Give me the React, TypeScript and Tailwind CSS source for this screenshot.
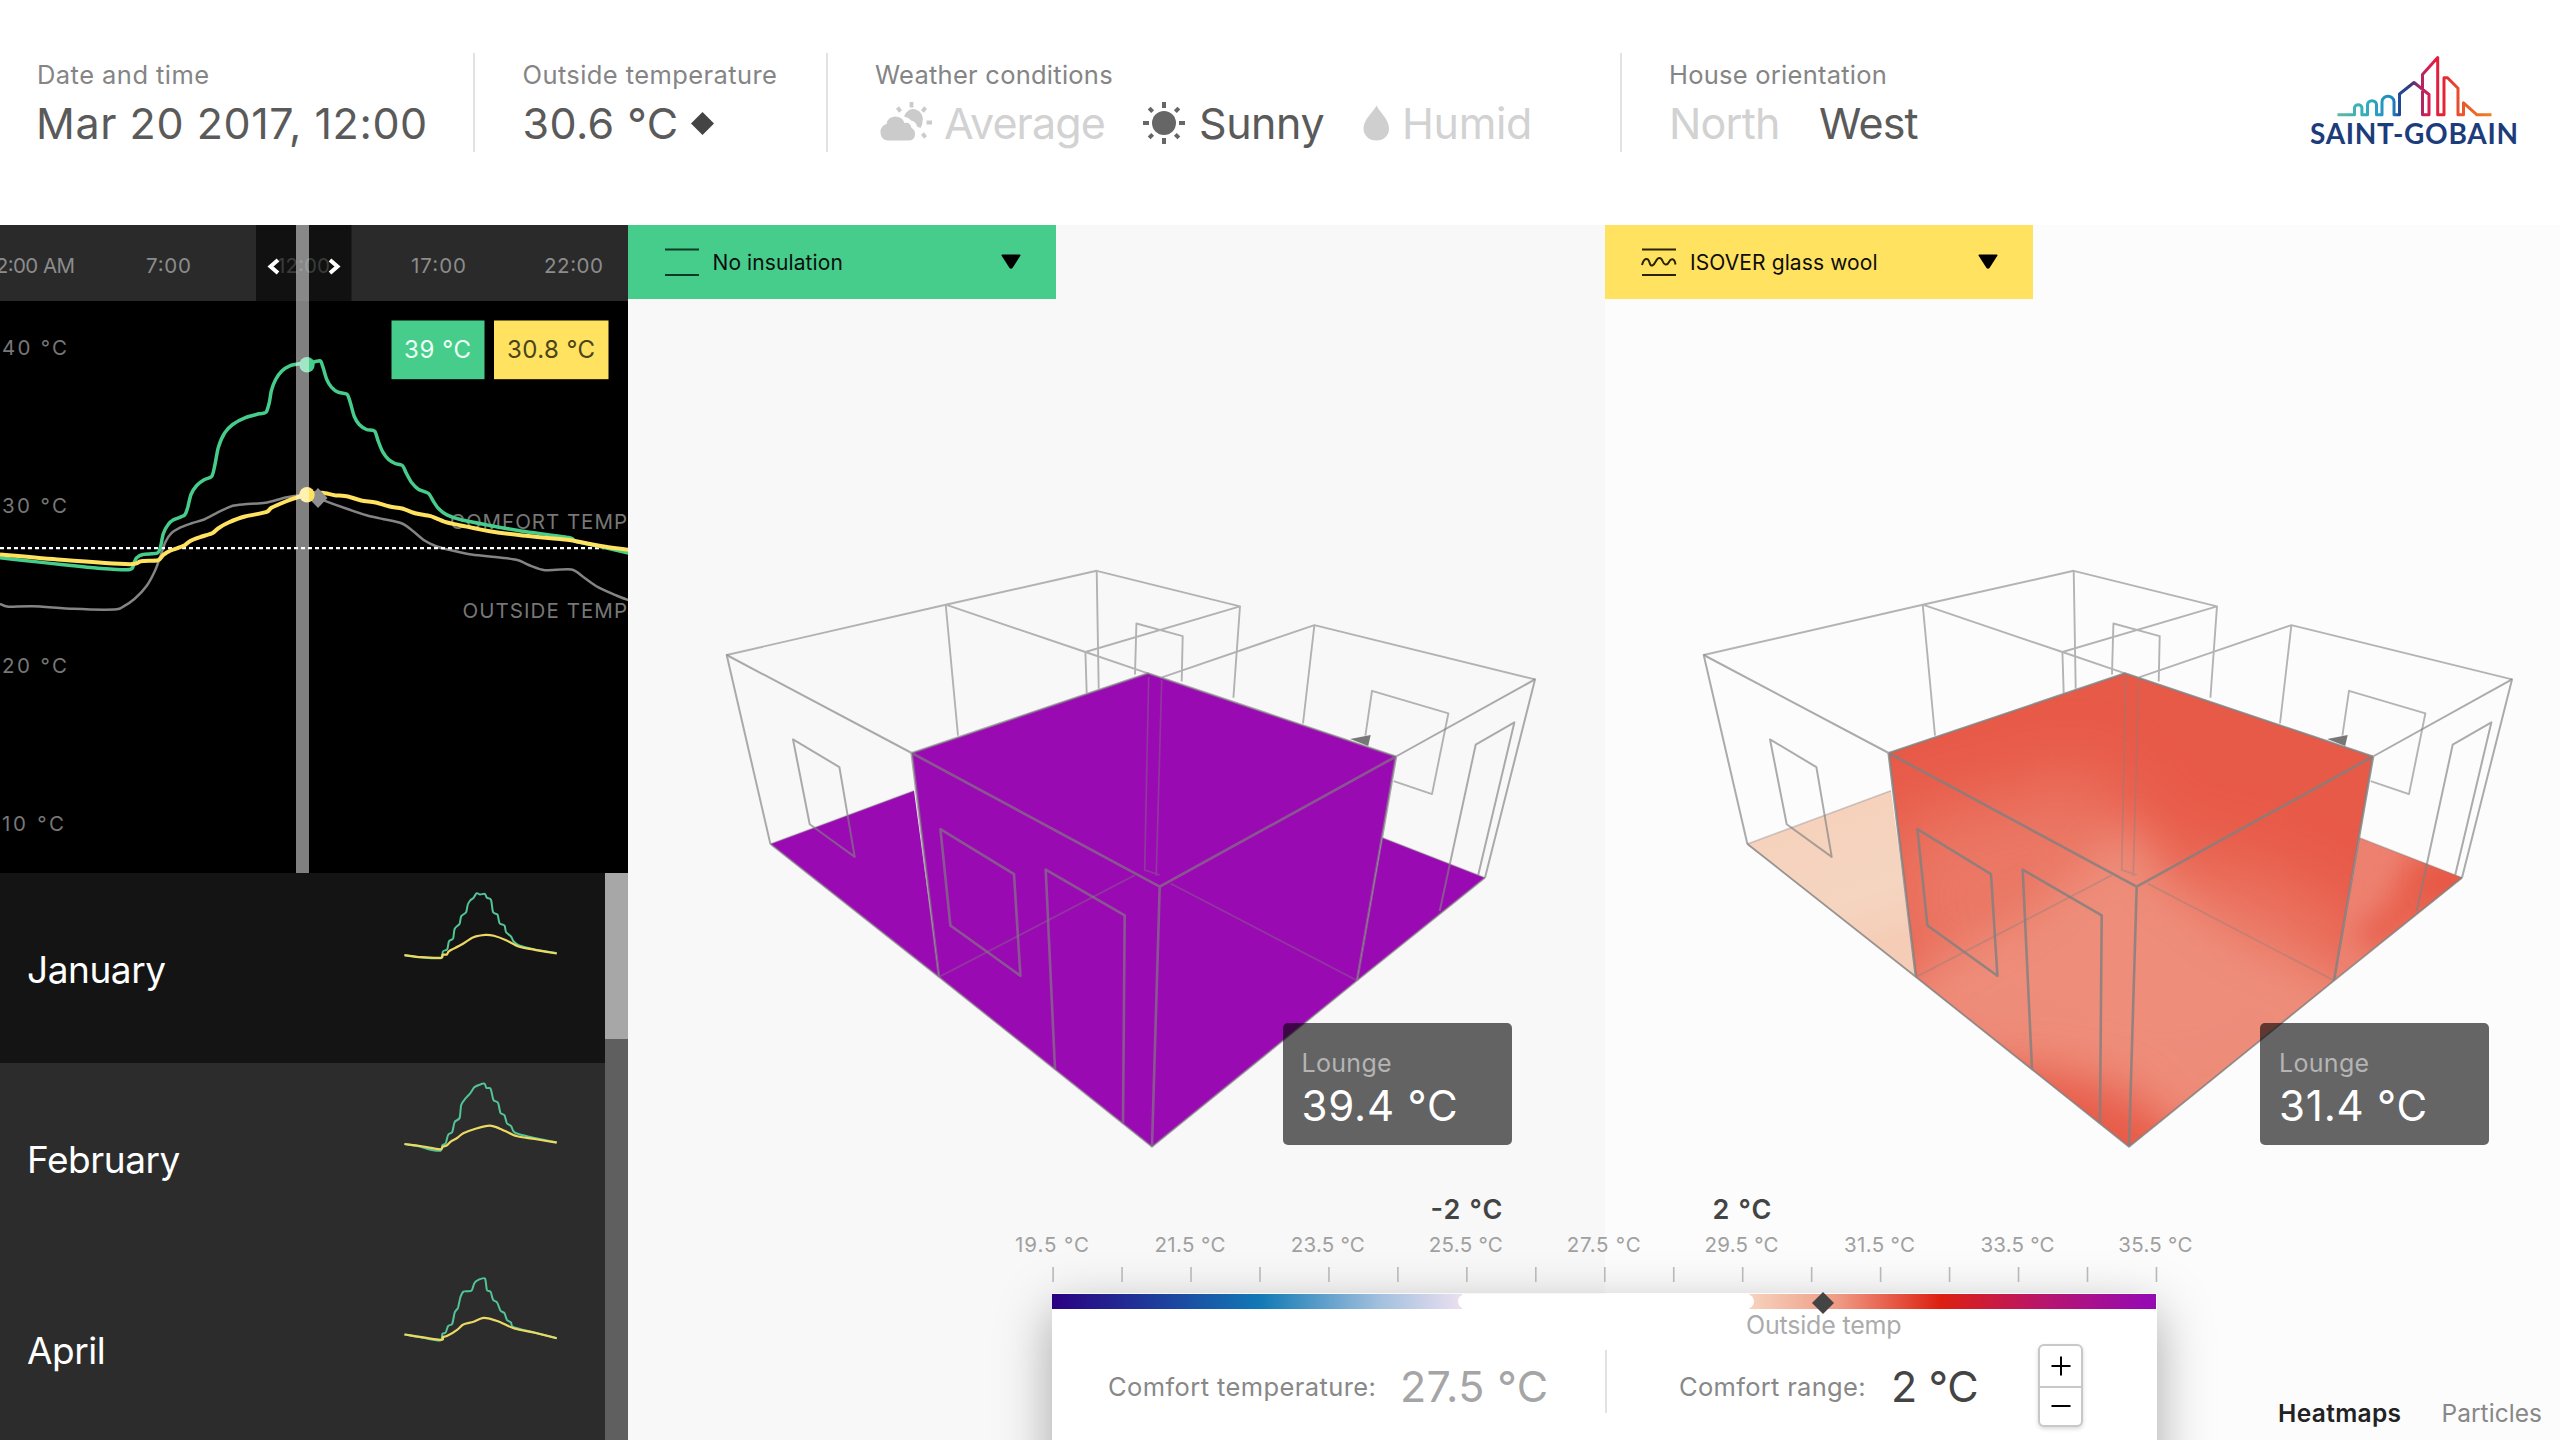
import React from "react";

type Pt = [number, number];

/* Chart samples are stored on a 2.45 x 3 grid and scaled to pixels here. */
const scalePts = (pts: Pt[], oy: number): Pt[] => pts.map(([x, y]) => [x / 2.45, oy + y / 3]);

/* Monotone-looking curve: cubic segments with damped tangents. */
const curve = (pts: Pt[]): string => {
  const t = 0.13;
  let d = `M${pts[0][0].toFixed(1)} ${pts[0][1].toFixed(1)}`;
  for (let i = 0; i < pts.length - 1; i++) {
    const p0 = pts[Math.max(0, i - 1)];
    const p1 = pts[i];
    const p2 = pts[i + 1];
    const p3 = pts[Math.min(pts.length - 1, i + 2)];
    d += `C${(p1[0] + (p2[0] - p0[0]) * t).toFixed(1)} ${(p1[1] + (p2[1] - p0[1]) * t).toFixed(1)} ${(
      p2[0] -
      (p3[0] - p1[0]) * t
    ).toFixed(1)} ${(p2[1] - (p3[1] - p1[1]) * t).toFixed(1)} ${p2[0].toFixed(1)} ${p2[1].toFixed(1)}`;
  }
  return d;
};

const GREEN: Pt[] = [[0,1012],[60,1020],[150,1032],[240,1043],[318,1047],[328,1027],[335,1012],[350,1002],[385,998],[393,980],[400,940],[412,912],[425,898],[452,884],[460,860],[468,822],[482,795],[500,778],[519,767],[527,730],[535,680],[550,638],[570,612],[600,592],[635,580],[652,575],[660,545],[665,510],[675,478],[690,452],[710,436],[735,430],[750,431],[783,421],[790,435],[800,475],[812,500],[828,515],[850,521],[858,545],[868,588],[880,612],[898,627],[918,632],[926,660],[938,695],[952,717],[968,729],[986,735],[995,757],[1008,785],[1025,806],[1050,819],[1062,843],[1075,865],[1095,883],[1130,898],[1200,915],[1280,932],[1393,951],[1410,962],[1470,978],[1540,998]];
const YELLOW: Pt[] = [[0,1002],[150,1018],[318,1031],[345,1022],[387,1019],[400,1003],[418,990],[450,976],[465,962],[490,950],[520,938],[535,923],[560,906],[600,888],[652,875],[665,862],[700,843],[735,828],[765,820],[790,817],[820,824],[852,828],[885,840],[920,846],[955,858],[985,864],[1020,879],[1055,887],[1090,904],[1130,915],[1200,932],[1280,945],[1390,958],[1430,967],[1480,978],[1540,988]];
const GRAY: Pt[] = [[0,1150],[20,1159],[80,1157],[180,1165],[280,1167],[300,1160],[330,1135],[360,1095],[380,1050],[395,1000],[405,965],[420,938],[440,922],[470,908],[500,897],[540,872],[570,856],[600,851],[650,847],[700,831],[740,824],[770,826],[790,838],[850,865],[900,885],[940,896],[985,909],[1010,930],[1040,960],[1070,978],[1100,988],[1150,1001],[1200,1008],[1265,1018],[1300,1036],[1335,1049],[1400,1047],[1430,1070],[1465,1100],[1510,1125],[1540,1139]];

const MONTHS: { name: string; active?: boolean; green: Pt[]; yellow: Pt[]; oy: number }[] = [
  {
    name: "January",
    active: true,
    oy: -272.5,
    green: [[991,1064],[1030,1070],[1080,1073],[1085,1053],[1096,1046],[1100,1022],[1110,1014],[1114,985],[1126,970],[1130,947],[1142,935],[1146,912],[1152,900],[1160,892],[1168,878],[1176,882],[1188,880],[1193,892],[1203,898],[1208,935],[1219,943],[1224,968],[1236,975],[1240,995],[1252,1008],[1258,1022],[1272,1035],[1310,1047],[1364,1058]],
    yellow: [[991,1064],[1030,1070],[1080,1072],[1084,1063],[1095,1062],[1100,1052],[1130,1033],[1160,1010],[1190,1003],[1210,1006],[1240,1019],[1270,1038],[1310,1048],[1364,1059]],
  },
  {
    name: "February",
    oy: -63,
    green: [[991,432],[1030,440],[1050,448],[1079,452],[1084,436],[1092,430],[1098,404],[1108,396],[1114,366],[1126,354],[1130,315],[1140,296],[1152,280],[1162,262],[1175,254],[1187,251],[1192,264],[1202,266],[1209,300],[1220,308],[1226,338],[1236,346],[1242,370],[1252,378],[1258,394],[1270,402],[1310,414],[1364,427]],
    yellow: [[991,432],[1030,438],[1078,448],[1085,440],[1095,436],[1105,424],[1120,414],[1135,400],[1165,386],[1200,377],[1225,386],[1265,408],[1310,417],[1364,428]],
  },
  {
    name: "April",
    oy: -253.5,
    green: [[991,1002],[1030,1010],[1078,1020],[1084,1000],[1092,996],[1098,976],[1108,970],[1114,936],[1122,922],[1128,890],[1136,873],[1155,871],[1162,848],[1172,838],[1188,834],[1193,868],[1202,874],[1208,898],[1218,906],[1226,930],[1236,938],[1242,958],[1252,966],[1258,980],[1310,996],[1364,1013]],
    yellow: [[991,1002],[1078,1018],[1085,1010],[1096,1006],[1120,988],[1135,972],[1160,964],[1185,952],[1220,962],[1260,984],[1310,997],[1364,1013]],
  },
];

const Label = ({ children, className = "" }: { children: React.ReactNode; className?: string }) => (
  <div className={`h-[30px] whitespace-nowrap text-[25.500px] leading-[30px] text-[#858585] ${className}`}>{children}</div>
);

const SunCloud = () => (
  <svg width="55" height="42" viewBox="0 0 55 42" className="shrink-0" fill="#cbcbcb">
    <g stroke="#cbcbcb" strokeWidth="3.8">
      <path d="M33.5 0v5.5M19.5 5.5l3 4M47.500 5.500l-3 4M48.500 20.500h5.500M44.500 31.500l3 4" />
    </g>
    <path d="M26 14.500a9.500 10 0 0 1 18.500 5.500q0 3.500-2 6l-3.500-1.500q-1-5-6-6-2-3-7-4z" />
    <path d="M9.500 38.500a8.500 8.500 0 0 1-1-16.500q1-7 8.500-7.500 7.500 0 9.500 6.500 6-1 7 5 3.500 1.500 3.500 6 0 6-6 6.500z" />
  </svg>
);

const Sun = () => (
  <svg width="44" height="44" viewBox="-22 -22 44 44" className="shrink-0" fill="#666">
    <circle r="12" />
    {[0, 45, 90, 135, 180, 225, 270, 315].map((a) => (
      <rect key={a} x="-2" y="-21" width="4" height={a % 90 ? 5 : 6} transform={`rotate(${a})`} />
    ))}
  </svg>
);

const Drop = () => (
  <svg width="27" height="36" viewBox="0 0 27 36" className="shrink-0" fill="#cfcfcf">
    <path d="M13.500 0.500C17 7.500 26 14.500 26 23.500 26 31 20.500 35.500 13.500 35.500S0.500 31 0.500 23.500C0.500 14.500 10 7.500 13.500 0.500z" />
  </svg>
);

const Logo = () => (
  <svg width="230" height="100" viewBox="2299 52.500 230 100" className="shrink-0">
    <defs>
      <linearGradient id="sky" gradientUnits="userSpaceOnUse" x1="2337" y1="0" x2="2492" y2="0">
        <stop offset="0" stopColor="#5cb8a0" />
        <stop offset="0.2" stopColor="#2eadc0" />
        <stop offset="0.36" stopColor="#1c86c0" />
        <stop offset="0.4" stopColor="#1f4a94" />
        <stop offset="0.47" stopColor="#343a80" />
        <stop offset="0.54" stopColor="#a82a62" />
        <stop offset="0.6" stopColor="#e01850" />
        <stop offset="0.68" stopColor="#e02434" />
        <stop offset="0.8" stopColor="#e8552c" />
        <stop offset="1" stopColor="#ee8222" />
      </linearGradient>
    </defs>
    <path
      d="M2337.500 114.300h17v-7a3.700 3 0 0 1 7.400 0v7h5.600v-10a4.500 4 0 0 1 9 0v10h5.500v-13a6 5.500 0 0 1 12 0v13h5.500v-20.800l14.500-11.500 15 12v20.300h-6.500v-40.300l15.200-17v57.300h6.300v-37h3.500l10.500 10.500v26.500h5.500v-12l13.500 12h14.500"
      fill="none"
      stroke="url(#sky)"
      strokeWidth="3"
      strokeLinejoin="round"
    />
    <text x="2310" y="143" fontFamily="Lato" fontSize="28" fontWeight="700" fill="#1c3c7c" textLength="208" lengthAdjust="spacing">
      SAINT-GOBAIN
    </text>
  </svg>
);

const Header = () => (
  <header className="flex h-[224.500px] shrink-0 bg-white pt-[53px]">
    <div className="flex h-[99px] w-[475px] flex-col border-r-2 border-[#e2e2e2] pt-[7px] pl-[37px]">
      <Label className="tracking-[0.450px]">Date and time</Label>
      <div className="mt-2 -ml-px text-[43px] leading-[50px] tracking-[0.580px] whitespace-nowrap text-[#5a5a5a]">Mar 20 2017, 12:00</div>
    </div>
    <div className="flex h-[99px] w-[353px] flex-col border-r-2 border-[#e2e2e2] pt-[7px] pl-[47.500px]">
      <Label className="tracking-[0.400px]">Outside temperature</Label>
      <div className="mt-2 flex items-center text-[43px] leading-[50px] tracking-[0.400px] whitespace-nowrap text-[#5a5a5a]">
        30.6 °C
        <svg width="23" height="23" viewBox="0 0 23 23" className="ml-[13px]" fill="#444">
          <path d="M11.500 0L23 11.500 11.500 23 0 11.500z" />
        </svg>
      </div>
    </div>
    <div className="flex h-[99px] w-[794px] flex-col border-r-2 border-[#e2e2e2] pt-[7px] pl-[47px]">
      <Label className="tracking-[0.250px]">Weather conditions</Label>
      <div className="mt-2 flex text-[43px] leading-[50px] tracking-[-0.850px] whitespace-nowrap text-[#d2d2d2]">
        <div className="flex w-[267px] items-center gap-[11px] pl-[3px]">
          <SunCloud />
          Average
        </div>
        <div className="flex w-[221px] items-center gap-[13px] tracking-[-0.450px] text-[#5a5a5a]">
          <Sun />
          Sunny
        </div>
        <div className="flex items-center gap-[12px] tracking-[-0.350px]">
          <Drop />
          Humid
        </div>
      </div>
    </div>
    <div className="flex h-[99px] flex-1 flex-col pt-[7px] pl-[47px]">
      <Label className="tracking-[0.250px]">House orientation</Label>
      <div className="mt-2 flex text-[43px] leading-[50px] tracking-[-0.800px] whitespace-nowrap">
        <div className="w-[150px] text-[#d2d2d2]">North</div>
        <div className="text-[#5a5a5a]">West</div>
      </div>
    </div>
    <div className="mr-[31px]">
      <Logo />
    </div>
  </header>
);

const TimeBar = () => (
  <svg width="628" height="76" viewBox="0 224.500 628 76" className="block shrink-0 bg-[#2a2a2a]">
    <g fill="#8c8c8c" fontSize="20.500">
      <text x="-12" y="272.500" textLength="87">12:00 AM</text>
      <text x="146" y="272.500" textLength="45">7:00</text>
      <text x="411" y="272.500" textLength="55">17:00</text>
      <text x="544" y="272.500" textLength="59">22:00</text>
    </g>
    <rect x="256" y="224" width="95.500" height="77" fill="#111" />
    <text x="277" y="272.500" textLength="53" fontSize="20.500" fill="#3a3a3a">12:00</text>
    <path d="M278 259.500l-7.500 6.500 7.500 6.500M330 259.500l7.500 6.500-7.500 6.500" fill="none" stroke="#fff" strokeWidth="4" />
  </svg>
);

const Chart = () => (
  <svg width="628" height="572" viewBox="0 300.500 628 572" className="block shrink-0 bg-black">
    <g fill="#777" fontSize="20.500">
      <text x="2" y="354.500" textLength="65">40 °C</text>
      <text x="2" y="512.500" textLength="65">30 °C</text>
      <text x="2" y="672.500" textLength="65">20 °C</text>
      <text x="2" y="830.500" textLength="62">10 °C</text>
      <text x="450" y="528.500" textLength="177">COMFORT TEMP</text>
      <text x="462.500" y="617.500" textLength="164.500">OUTSIDE TEMP</text>
    </g>
    <path d={curve(scalePts(GRAY, 220))} fill="none" stroke="#848484" strokeWidth="2.500" />
    <path d="M0 547.700H604" stroke="#fff" strokeWidth="2.200" strokeDasharray="4 3" />
    <path d={curve(scalePts(GREEN, 220))} fill="none" stroke="#46cd8c" strokeWidth="3.500" strokeLinejoin="round" />
    <path d={curve(scalePts(YELLOW, 220))} fill="none" stroke="#ffe25f" strokeWidth="4" strokeLinejoin="round" />
    <path d="M318 487.500l9.500 10-9.500 10-9.500-10z" fill="#8f8f8f" />
    <circle cx="307" cy="364.300" r="7.700" fill="#46cd8c" />
    <circle cx="307" cy="494.300" r="7.700" fill="#ffe25f" />
    <g>
      <rect x="391.500" y="320" width="93" height="58.700" fill="#46cd8c" />
      <rect x="494" y="320" width="114.500" height="58.700" fill="#ffe25f" />
      <text x="404" y="357.700" fontSize="24" fill="#f0fff6" textLength="67">39 °C</text>
      <text x="507" y="357.700" fontSize="24" fill="#4a431c" textLength="88">30.8 °C</text>
    </g>
  </svg>
);

const MonthRow = ({ m }: { m: (typeof MONTHS)[number] }) => (
  <div className={`flex h-[190.500px] shrink-0 ${m.active ? "bg-[#141414]" : "bg-[#2c2c2c]"}`}>
    <div className="w-[376px] pt-[75px] pl-[27px] text-[37px] leading-[44px] tracking-[-0.450px] whitespace-nowrap text-white">{m.name}</div>
    <svg width="200" height="100" viewBox="376 0 200 100">
      <path d={curve(scalePts(m.green, m.oy))} fill="none" stroke="#52c596" strokeWidth="2" />
      <path d={curve(scalePts(m.yellow, m.oy))} fill="none" stroke="#ecd964" strokeWidth="2.200" />
    </svg>
  </div>
);

const Sidebar = () => (
  <aside className="relative flex w-[627.500px] shrink-0 flex-col overflow-hidden bg-[#2c2c2c]">
    <TimeBar />
    <Chart />
    <div className="absolute top-0 left-[296px] h-[648px] w-[13px] bg-white/50" />
    <div className="flex min-h-0 flex-1">
      <div className="flex w-[604.500px] flex-col overflow-hidden">
        {MONTHS.map((m) => (
          <MonthRow key={m.name} m={m} />
        ))}
      </div>
      <div className="flex-1 bg-[#5f5f5f]">
        <div className="h-[166px] bg-[#a7a7a7]" />
      </div>
    </div>
  </aside>
);

const LOUNGE = "912,753 1148.300,673.300 1396.300,756.500 1357.300,980.600 1152.300,1146.700 939.300,977";
const LEFT_FLOOR = "770.700,844 914.300,790.800 939.300,977";
const RIGHT_FLOOR = "1382.700,837.800 1485.300,877.800 1357.300,980.600";

const House = ({ hot }: { hot: boolean }) => (
  <svg width="977" height="1215" viewBox="628.300 225 977 1215" className="pointer-events-none absolute top-0 left-0">
    {hot ? (
      <>
        <defs>
          <clipPath id="lounge">
            <polygon points={LOUNGE} />
          </clipPath>
          <clipPath id="rightFloor">
            <polygon points={RIGHT_FLOOR} />
          </clipPath>
          <filter id="wide" x="-50%" y="-50%" width="200%" height="200%">
            <feGaussianBlur stdDeviation="36" />
          </filter>
          <filter id="soft" x="-50%" y="-50%" width="200%" height="200%">
            <feGaussianBlur stdDeviation="21" />
          </filter>
          <filter id="streak" x="-100%" y="-100%" width="300%" height="300%">
            <feGaussianBlur stdDeviation="14" />
          </filter>
          <linearGradient id="peach" x1="0" y1="0" x2="0.300" y2="1">
            <stop offset="0" stopColor="#f6d0ba" />
            <stop offset="0.700" stopColor="#f5d5c0" />
            <stop offset="1" stopColor="#f5ccb6" />
          </linearGradient>
        </defs>
        <polygon points={LEFT_FLOOR} fill="url(#peach)" />
        <g clipPath="url(#rightFloor)">
          <rect x="1350" y="830" width="140" height="155" fill="#ed8170" />
          <polygon points="1435,850 1500,870 1500,890 1400,955 1375,935 1410,905" fill="#e8604e" filter="url(#streak)" />
          <ellipse cx="1472" cy="880" rx="24" ry="16" fill="#e6523f" filter="url(#streak)" />
        </g>
        <g clipPath="url(#lounge)">
          <rect x="900" y="660" width="510" height="500" fill="#e85a48" />
          <polygon points="900,830 1000,800 1120,770 1170,850 1300,880 1390,930 1370,1030 1200,1110 1100,1080 930,1000" fill="#ec8572" opacity="0.700" filter="url(#wide)" />
          <polygon points="910,1000 940,975 1050,915 1110,865 1140,825 1162,840 1185,885 1260,940 1340,975 1400,985 1380,1020 1240,1140 1200,1135 1155,1085 1090,1068 980,1060" fill="#ee917e" opacity="0.850" filter="url(#soft)" />
        </g>
      </>
    ) : (
      <g fill="#9a0ab2">
        <polygon points={LEFT_FLOOR} />
        <polygon points={RIGHT_FLOOR} />
        <polygon points={LOUNGE} />
      </g>
    )}
    <path d="M1350.500 739l20.500-4-2.500 11z" fill="#777" />
    <g fill="none" stroke="#808080" strokeLinejoin="round">
      <g strokeWidth="1.900" opacity="0.580">
        <path d="M727 655L946 604.700 1097 570.800 1240.300 606.300 1085.700 652" />
        <path d="M946 604.700L1085.700 652 1148.300 673.300" />
        <path d="M1097 570.800L1099 688.800M1085.700 652l1.300 41M946 604.700l12.300 131M1240.300 606.300l-6.600 91.500" />
        <path d="M1162.300 677.300L1314.700 625.100 1535.300 679.400M1314.700 625.100l-11.400 98.400" />
        <path d="M1135.300 674.500l1.400-51 46.300 12.600-1 45.400" />
        <path d="M1365.700 735.700l6.600-44.900 76.400 22.500-16.400 80.800-38.300-13" />
      </g>
      <g strokeWidth="2" opacity="0.650">
        <path d="M912 753L727 655 770.700 844M1396.300 756.500L1535.300 679.400 1485.300 877.800" />
        <path d="M793.300 739.400l46.400 27.700 15.300 89.800-45-32.600z" />
        <path d="M1440 911l36-166.300 38.700-22.400L1478.500 875" />
      </g>
      <g strokeWidth="1.700" opacity="0.380">
        <path d="M770.700 844L914.300 790.800M1382.700 837.800l102.600 40" />
        <path d="M939.300 977L1135 875.300M1357.300 980.600L1171 883.500M1149 677l-4 193 15 5M1162 680l-5.500 196" />
      </g>
      <g strokeWidth="2.600" opacity={hot ? 0.8 : 0.65}>
        <path d="M912 753L1160 886.700 1396.300 756.500M1160 886.700L1152.300 1146.700M912 753L939.300 977M1396.300 756.500L1357.300 980.600" />
        <path d="M912 753L1148.300 673.300 1396.300 756.500" strokeWidth="2" />
        <path d="M940.700 829.200l73.600 44.900 6.400 101.600-70-50.200zM1055.300 1069.200L1046 869.600l79 45.700-1.700 208.200" />
        <path d="M770.700 844L939.300 977 1152.300 1146.700 1357.300 980.600 1485.300 877.800" strokeWidth="1.800" />
      </g>
    </g>
  </svg>
);

const Pane = ({
  title,
  temp,
  hot,
}: {
  title: string;
  temp: string;
  hot: boolean;
}) => (
  <section className={`relative overflow-hidden ${hot ? "flex-1 bg-[#fcfcfc]" : "w-[977.500px] shrink-0 bg-[#f8f8f8]"}`}>
    <House hot={hot} />
    <div className={`relative flex h-[74.500px] w-[428px] items-center pl-[36px] pr-[35px] ${hot ? "bg-[#ffe25f]" : "bg-[#46cd8c]"}`}>
      <svg width="36" height="30" viewBox="0 0 36 30" fill="none" stroke={hot ? "#2a2300" : "#0c3a24"} strokeWidth="2">
        <path d="M1 2.500h34M1 28h34" />
        {hot && <path d="M1 18c2-7 6-8 7.500-2.500S13 18 15 14s5-4 6.500 0 4.500 5 6.500 1 5.500-4 6.500 2.500" />}
      </svg>
      <div className="ml-[13px] flex-1 pt-[3px] text-[21px] leading-[30px] tracking-[0.100px] whitespace-nowrap text-[#0d0d0d]">{title}</div>
      <svg width="20" height="15" viewBox="0 0 20 15">
        <path d="M1.500 0.500h17q1.500 0 .7 1.500L11.500 14q-1.500 1.500-3 0L.8 2Q0 .5 1.500.5z" fill="#000" />
      </svg>
    </div>
    <div className="absolute top-[798.500px] left-[655px] h-[122px] w-[229px] rounded-[5px] bg-black/60 pt-[25px] pl-[19px]">
      <div className="text-[25px] leading-[30px] tracking-[0.300px] whitespace-nowrap text-[#b4b4b4]">Lounge</div>
      <div className="text-[42px] leading-[56px] tracking-[0.800px] whitespace-nowrap text-white">{temp}</div>
    </div>
  </section>
);

const TICK = 68.96;

const Scale = () => (
  <svg width="1240" height="110" viewBox="985 1184 1240 110" className="block">
    <g textAnchor="middle" fontSize="27" fontWeight="600" fill="#444">
      <text x="1466.500" y="1219" textLength="72">-2 °C</text>
      <text x="1742" y="1219" textLength="59">2 °C</text>
    </g>
    <g textAnchor="middle" fontSize="20.500" fill="#a0a0a0">
      {Array.from({ length: 9 }, (_, i) => (
        <text key={i} x={1053 + i * 2 * TICK - 1} y="1251.500" textLength={i === 1 || i === 6 ? 71 : 74}>
          {`${(19.5 + i * 2).toFixed(1)} °C`}
        </text>
      ))}
    </g>
    <g fill="#b8b8b8">
      {Array.from({ length: 17 }, (_, i) => (
        <rect key={i} x={1052.3 + i * TICK} y="1267" width="1.600" height="15" />
      ))}
    </g>
  </svg>
);

const ComfortPanel = () => (
  <div className="absolute bottom-0 left-[985px] w-[1240px]">
    <div className="absolute top-[109.500px] left-[67px] h-[300px] w-[1105px] shadow-[0_18px_50px_rgba(0,0,0,0.34)]" />
    <div className="relative">
      <Scale />
    </div>
    <div className="relative ml-[67px] h-[146.500px] w-[1105px] bg-white">
      <div className="flex h-[15px] w-[1103.500px] justify-between">
        <div className="w-[410px] bg-[linear-gradient(90deg,#2a0082_0%,#127ab5_51%,#a3c0de_80%,#e8deef_99%)]" />
        <div className="w-[407px] bg-[linear-gradient(90deg,#f6d3be_0%,#ef9a84_22%,#dd2010_47%,#b8156c_72%,#960ab2_98%)]" />
      </div>
      <div className="absolute top-0 left-[406px] h-[15px] w-[296px] rounded-full bg-white" />
      <svg width="22" height="22" viewBox="0 0 22 22" className="absolute top-[-2px] left-[760px]" fill="#444">
        <path d="M11 0L22 11 11 22 0 11z" />
      </svg>
      <div className="absolute top-[16px] left-[694px] text-[25px] leading-[30px] tracking-[-0.200px] whitespace-nowrap text-[#ababab]">Outside temp</div>
      <div className="flex pt-[35px]">
        <div className="mt-[6px] flex h-[63px] w-[555px] items-center border-r-2 border-[#e2e2e2] pl-[56px] whitespace-nowrap">
          <div className="w-[292px] pt-[11px] text-[25.500px] leading-[40px] tracking-[0.400px] text-[#888]">Comfort temperature:</div>
          <div className="pt-[9px] text-[43px] leading-[50px] tracking-[0.400px] text-[#a5a5a5]">27.5 °C</div>
        </div>
        <div className="mt-[6px] flex h-[63px] w-[431px] items-center pl-[72px] whitespace-nowrap">
          <div className="w-[212px] pt-[11px] text-[25.500px] leading-[40px] tracking-[0.300px] text-[#888]">Comfort range:</div>
          <div className="pt-[9px] text-[43px] leading-[50px] tracking-[-0.400px] text-[#444]">2 °C</div>
        </div>
        <div className="flex h-[83px] w-[45px] flex-col divide-y-2 divide-[#c8c8c8] rounded-[6px] border-2 border-[#c8c8c8] bg-white shadow-[0_2px_4px_rgba(0,0,0,0.15)]">
          <div className="flex h-[42px] items-center justify-center">
            <svg width="20" height="20" viewBox="0 0 20 20" stroke="#000" strokeWidth="2">
              <path d="M0.500 10h19M10 0.500v19" />
            </svg>
          </div>
          <div className="flex flex-1 items-center justify-center">
            <svg width="20" height="4" viewBox="0 0 20 4" stroke="#000" strokeWidth="2">
              <path d="M0.500 2h19" />
            </svg>
          </div>
        </div>
      </div>
    </div>
  </div>
);

export default function App() {
  return (
    <div className="relative flex h-[1440px] w-[2560px] flex-col overflow-hidden bg-white font-['Inter',sans-serif]">
      <Header />
      <main className="flex min-h-0 flex-1">
        <Sidebar />
        <Pane title="No insulation" temp="39.4 °C" hot={false} />
        <Pane title="ISOVER glass wool" temp="31.4 °C" hot />
      </main>
      <ComfortPanel />
      <nav className="absolute right-[18px] bottom-[12px] flex gap-[40px] text-[24.500px] leading-[30px] whitespace-nowrap">
        <span className="font-semibold tracking-[0.350px] text-[#222]">Heatmaps</span>
        <span className="tracking-[0.050px] text-[#888]">Particles</span>
      </nav>
    </div>
  );
}
